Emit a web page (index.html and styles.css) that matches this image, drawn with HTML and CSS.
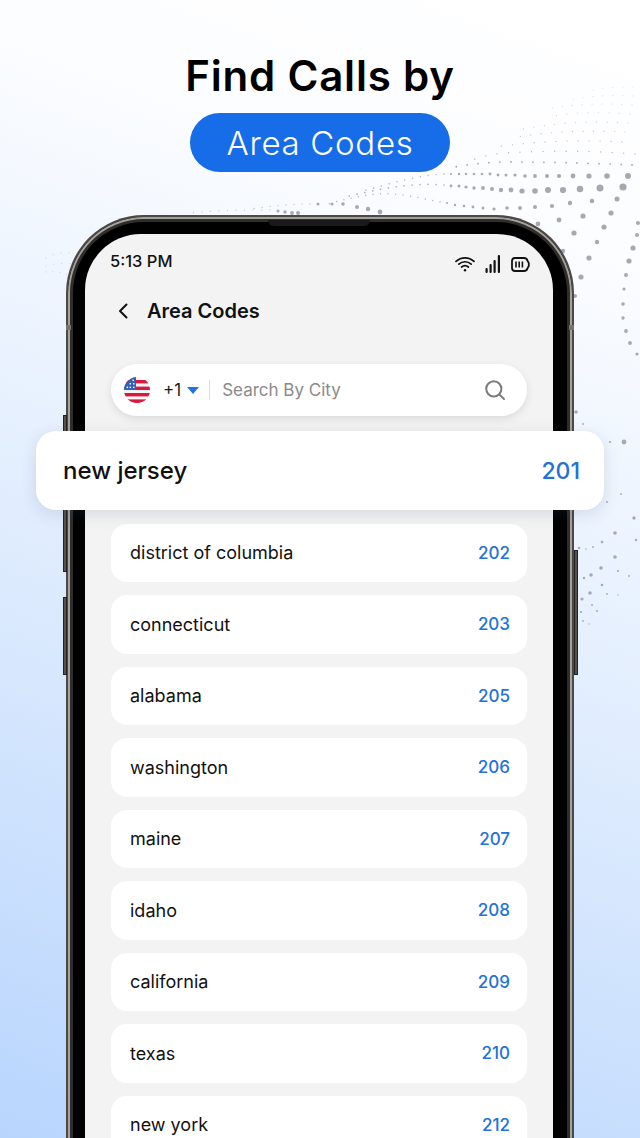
FILE: index.html
```html
<!DOCTYPE html>
<html lang="en">
  <head>
    <meta charset="UTF-8" />
    <meta name="viewport" content="width=device-width, initial-scale=1.0" />
    <title>Find Calls by Area Codes</title>
    <link rel="stylesheet" href="styles.css">
  </head>
  <body>
    <!-- Dotted wave behind the phone -->
    <svg class="dots" width="640" height="1138" viewBox="0 0 640 1138" aria-hidden="true">
      <g fill="none" stroke="#a6aab0" stroke-linecap="round">
        <path stroke-width="0.9" stroke-dasharray="0 10" opacity="0.5" d="M633 87 C610 87 600 88 585 92" />
        <path stroke-width="0.9" stroke-dasharray="0 10" opacity="0.55" d="M633 96 C605 95 590 96 570 100" />
        <path stroke-width="1" stroke-dasharray="0 10" opacity="0.6" d="M632 105 C605 103 580 104 550 108" />
        <path stroke-width="1" stroke-dasharray="0 10.5" opacity="0.65" d="M630 114 C600 112 575 112 555 116" />
        <path stroke-width="1.1" stroke-dasharray="0 10.5" opacity="0.7" d="M628 123 C595 121 560 122 523 129" />
        <path stroke-width="1.2" stroke-dasharray="0 10.5" opacity="0.75" d="M625 132 C590 130 550 131 510 138" />
        <path stroke-width="1.3" stroke-dasharray="0 11" opacity="0.8" d="M622 142 C590 140 545 140 495 147" />
        <path stroke-width="1.4" stroke-dasharray="0 11.5" opacity="0.85" d="M635 154 C600 151 550 150 505 153 C490 154 480 157 470 161" />
        <path stroke-width="1.8" stroke-dasharray="0 11" d="M632 165 C590 163 540 162 510 162 C490 162 470 164 455 167" />
        <path stroke-width="1.6" stroke-dasharray="0 8" opacity="0.85" d="M444 174 C420 175 395 182 360 192" />
        <path stroke-width="1.7" stroke-dasharray="0 8" opacity="0.9" d="M444 185 C420 183 395 185 345 197" />
        <path stroke-width="1.4" stroke-dasharray="0 7.5" opacity="0.9" d="M440 202 C420 198 395 192 377 194 C360 196 345 199 328 204" />
        <path stroke-width="1.3" stroke-dasharray="0 8" opacity="0.8" d="M310 204 C290 204 270 206 250 209" />
        <path stroke-width="1.2" stroke-dasharray="0 8.5" opacity="0.75" d="M270 210 C245 209 215 211 188 213" />
        <path stroke-width="1" stroke-dasharray="0 8" opacity="0.6" d="M46 258 C56 252 66 252 78 254" />
        <path stroke-width="1" stroke-dasharray="0 8" opacity="0.6" d="M46 266 C56 263 64 263 74 264" />
        <path stroke-width="1" stroke-dasharray="0 7" opacity="0.6" d="M46 272 C54 271 62 272 70 276" />
      </g>
      <g fill="#a6aab0">
        <circle cx="628" cy="176" r="3" /><circle cx="607" cy="176" r="2.8" /><circle cx="589" cy="176" r="2.6" />
        <circle cx="573" cy="176" r="2.4" /><circle cx="559" cy="176" r="2.1" /><circle cx="547" cy="176" r="2" />
        <circle cx="535" cy="176" r="1.9" /><circle cx="525" cy="176" r="1.8" /><circle cx="515" cy="175" r="1.6" />
        <circle cx="506" cy="175" r="1.5" /><circle cx="498" cy="175" r="1.4" /><circle cx="490" cy="174" r="1.4" />
        <circle cx="482" cy="174" r="1.3" /><circle cx="474" cy="174" r="1.3" /><circle cx="466" cy="174" r="1.2" />
        <circle cx="459" cy="174" r="1.2" /><circle cx="451" cy="174" r="1.1" />

        <circle cx="623" cy="187" r="3.6" /><circle cx="600" cy="188" r="3.5" /><circle cx="580" cy="189" r="3.3" />
        <circle cx="563" cy="190" r="3.1" /><circle cx="548" cy="190" r="3" /><circle cx="535" cy="191" r="2.8" />
        <circle cx="522" cy="191" r="2.6" /><circle cx="511" cy="190" r="2.4" /><circle cx="501" cy="190" r="2.2" />
        <circle cx="492" cy="189" r="2" /><circle cx="483" cy="188" r="1.9" /><circle cx="474" cy="188" r="1.7" />
        <circle cx="466" cy="187" r="1.6" /><circle cx="459" cy="186" r="1.5" /><circle cx="451" cy="186" r="1.4" />

        <circle cx="617" cy="199" r="2.5" /><circle cx="592" cy="201" r="2.3" /><circle cx="570" cy="203" r="2.2" />
        <circle cx="552" cy="206" r="2.1" /><circle cx="535" cy="207" r="2" /><circle cx="520" cy="208" r="1.9" />
        <circle cx="507" cy="208" r="1.8" /><circle cx="494" cy="209" r="1.6" /><circle cx="483" cy="208" r="1.5" />
        <circle cx="473" cy="207" r="1.4" /><circle cx="464" cy="206" r="1.3" /><circle cx="455" cy="205" r="1.2" />
        <circle cx="447" cy="203" r="1.1" />

        <circle cx="380" cy="212" r="2.4" /><circle cx="368" cy="209" r="2.2" /><circle cx="357" cy="207" r="2" />
        <circle cx="343" cy="204" r="1.8" /><circle cx="332" cy="204" r="1.6" /><circle cx="318" cy="204" r="1.5" />
        <circle cx="298" cy="213" r="2" /><circle cx="292" cy="213" r="1.9" /><circle cx="285" cy="212" r="1.7" />
        <circle cx="278" cy="211" r="1.5" />

        <circle cx="611" cy="213" r="2.6" /><circle cx="604" cy="227" r="2.6" /><circle cx="597" cy="242" r="2.2" />
        <circle cx="589" cy="258" r="2.6" /><circle cx="581" cy="277" r="2.6" /><circle cx="575" cy="296" r="2" />
        <circle cx="583" cy="216" r="2.6" /><circle cx="574" cy="233" r="2.6" /><circle cx="563" cy="251" r="2.2" />
        <circle cx="559" cy="220" r="2.4" /><circle cx="538" cy="224" r="2.4" />
        <circle cx="638" cy="223" r="2" /><circle cx="637" cy="235" r="2" /><circle cx="633" cy="248" r="2.6" />
        <circle cx="629" cy="261" r="2.6" /><circle cx="626" cy="275" r="2" /><circle cx="624" cy="289" r="1.6" />
        <circle cx="623" cy="304" r="1.8" /><circle cx="623" cy="318" r="1.7" /><circle cx="626" cy="331" r="1.9" />
        <circle cx="630" cy="343" r="1.9" /><circle cx="637" cy="354" r="1.6" />

        <circle cx="576" cy="412" r="1.8" /><circle cx="583" cy="424" r="0.9" />
        <circle cx="624" cy="442" r="2.4" /><circle cx="610" cy="442" r="1.1" /><circle cx="621" cy="494" r="0.9" />
        <circle cx="607" cy="502" r="1" /><circle cx="634" cy="518" r="1.7" /><circle cx="615" cy="533" r="1.8" />
        <circle cx="636" cy="540" r="1.2" /><circle cx="602" cy="542" r="1.3" /><circle cx="593" cy="547" r="0.9" />
        <circle cx="579" cy="548" r="1.2" /><circle cx="586" cy="549" r="0.8" /><circle cx="615" cy="557" r="1.8" />
        <circle cx="601" cy="568" r="1.8" /><circle cx="618" cy="571" r="1.1" /><circle cx="629" cy="576" r="0.9" />
        <circle cx="591" cy="575" r="1.8" /><circle cx="584" cy="578" r="1.2" /><circle cx="602" cy="585" r="1.3" />
        <circle cx="590" cy="593" r="1.8" /><circle cx="607" cy="594" r="0.9" /><circle cx="618" cy="595" r="0.7" />
        <circle cx="582" cy="599" r="1.6" /><circle cx="592" cy="605" r="1" /><circle cx="597" cy="611" r="1" />
        <circle cx="581" cy="612" r="1.1" /><circle cx="583" cy="621" r="0.9" /><circle cx="589" cy="624" r="0.7" />
      </g>
    </svg>

    <header class="hero">
      <h1 class="hero-title">Find Calls by</h1>
      <div class="hero-pill">Area Codes</div>
    </header>

    <div class="phone">
      <span class="side-btn side-btn-top"></span>
      <span class="side-btn side-btn-low"></span>
      <span class="side-btn side-btn-right"></span>
      <span class="speaker"></span>
      <span class="band band-left"></span>
      <span class="band band-right"></span>

      <div class="screen">
        <div class="status-bar">
          <span class="clock">5:13 PM</span>
          <div class="status-icons">
            <svg width="20" height="16" viewBox="0 0 20 16" fill="none" stroke="#111" stroke-width="1.7" stroke-linecap="round">
              <path d="M1 5.4 C6 0.6 14 0.6 19 5.4" />
              <path d="M3.8 8.2 C7.4 4.9 12.6 4.9 16.2 8.2" />
              <path d="M6.6 11 C8.6 9.3 11.4 9.3 13.4 11" />
              <circle cx="10" cy="14.2" r="1.2" fill="#111" stroke="none" />
            </svg>
            <svg width="16" height="18" viewBox="0 0 16 18" fill="#111">
              <rect x="0.5" y="13" width="2.2" height="5" rx="1" />
              <rect x="4.5" y="9" width="2.2" height="9" rx="1" />
              <rect x="8.5" y="5" width="2.2" height="13" rx="1" />
              <rect x="12.8" y="0" width="2.2" height="18" rx="1" />
            </svg>
            <svg width="19" height="15" viewBox="0 0 19 15" fill="none" stroke="#111">
              <path stroke-width="1.8" d="M4 1 H13 C15 1 16.2 2 16.6 4 L17.8 6 V9 L16.6 11 C16.2 13 15 14 13 14 H4 C2 14 1 13 1 11 V4 C1 2 2 1 4 1 Z" />
              <path stroke-width="1.6" d="M5 4.5 V10.5 M8.2 4.5 V10.5 M11.4 4.5 V10.5" />
            </svg>
          </div>
        </div>

        <div class="app-bar">
          <svg width="12" height="18" viewBox="0 0 12 18" fill="none" stroke="#111" stroke-width="2" stroke-linecap="round" stroke-linejoin="round">
            <path d="M9.5 2.5 L3 9 L9.5 15.5" />
          </svg>
          <span class="app-title">Area Codes</span>
        </div>

        <div class="search-bar">
          <svg class="flag" width="26" height="26" viewBox="0 0 26 26">
            <defs>
              <clipPath id="flagClip"><circle cx="13" cy="13" r="13" /></clipPath>
            </defs>
            <g clip-path="url(#flagClip)">
              <rect width="26" height="26" fill="#f4f4f4" />
              <rect y="3" width="26" height="3.4" fill="#d8183c" />
              <rect y="9.6" width="26" height="3.4" fill="#d8183c" />
              <rect y="16" width="26" height="3.4" fill="#d8183c" />
              <rect y="22.4" width="26" height="3.6" fill="#d8183c" />
              <path d="M0 13 H12 V0 H8 L0 8 Z" fill="#2f5fb8" />
              <g fill="#fff">
                <rect x="8.4" y="2.6" width="1.5" height="1.5" />
                <rect x="5.6" y="6" width="1.5" height="1.5" /><rect x="9" y="6" width="1.5" height="1.5" />
                <rect x="2.6" y="9.6" width="1.5" height="1.5" /><rect x="5.6" y="9.6" width="1.5" height="1.5" />
                <rect x="9" y="9.6" width="1.5" height="1.5" />
              </g>
            </g>
          </svg>
          <span class="dial">+1</span>
          <span class="caret"></span>
          <span class="divider"></span>
          <span class="search-text">Search By City</span>
          <svg class="search-icon" width="22" height="22" viewBox="0 0 22 22" fill="none" stroke="#7b7b7b" stroke-width="2" stroke-linecap="round">
            <circle cx="9.8" cy="9.8" r="7.6" />
            <path d="M15.6 15.6 L20 20" />
          </svg>
        </div>

        <div class="row-featured">
          <span>new jersey</span>
          <span class="row-featured-code">201</span>
        </div>

        <ul class="code-list">
          <li class="code-row"><span>district of columbia</span><span class="code">202</span></li>
          <li class="code-row"><span>connecticut</span><span class="code">203</span></li>
          <li class="code-row"><span>alabama</span><span class="code">205</span></li>
          <li class="code-row"><span>washington</span><span class="code">206</span></li>
          <li class="code-row"><span>maine</span><span class="code">207</span></li>
          <li class="code-row"><span>idaho</span><span class="code">208</span></li>
          <li class="code-row"><span>california</span><span class="code">209</span></li>
          <li class="code-row"><span>texas</span><span class="code">210</span></li>
          <li class="code-row"><span>new york</span><span class="code">212</span></li>
        </ul>
      </div>
    </div>
  </body>
</html>
```

FILE: styles.css
```css
* {
  box-sizing: border-box;
}

html,
body {
  margin: 0;
  height: 1138px;
  overflow: hidden;
}

body {
  position: relative;
  width: 640px;
  font-family: Inter, "Noto Sans", sans-serif;
  color: #111;
  background: linear-gradient(200deg, #ffffff 0%, #fcfdff 18%, #e4effe 50%, #b8d5fd 100%);
}

/* Background dots */
.dots {
  position: absolute;
  top: 0;
  left: 0;
}

/* Headline */
.hero {
  position: relative;
  display: flex;
  flex-direction: column;
  align-items: center;
  padding-top: 51px;
}

.hero-title {
  margin: 0;
  font-size: 42px;
  line-height: 50px;
  font-weight: 600;
  letter-spacing: 0.8px;
  color: #000;
}

.hero-pill {
  display: flex;
  align-items: center;
  justify-content: center;
  width: 260px;
  height: 59px;
  margin-top: 12px;
  border-radius: 30px;
  background-color: #176de8;
  color: #fff;
  font-size: 33px;
  font-weight: 300;
  letter-spacing: 0.7px;
}

/* Phone body */
.phone {
  position: relative;
  width: 508px;
  height: 960px;
  margin: 43px 0 0 66px;
  padding: 17px 19px 0 17px;
  border: 2px solid #4b4845;
  border-bottom: none;
  border-radius: 78px 78px 0 0;
  background-color: #000;
  box-shadow: inset 0 0 0 2px #a5a19b, inset 0 0 0 5px #302e2c;
}

.side-btn {
  position: absolute;
  width: 4px;
  background-color: #55524f;
  border: 1px solid #222;
}

.side-btn-top {
  left: -5px;
  top: 198px;
  height: 157px;
}

.side-btn-low {
  left: -5px;
  top: 380px;
  height: 78px;
}

.side-btn-right {
  right: -6px;
  top: 333px;
  height: 125px;
}

.speaker {
  position: absolute;
  top: 3px;
  left: 200px;
  width: 102px;
  height: 6px;
  border-radius: 0 0 6px 6px;
  background-color: #1a1a1a;
}

.band {
  position: absolute;
  top: 108px;
  width: 5px;
  height: 5px;
  background-color: #77736f;
}

.band-left {
  left: -2px;
}

.band-right {
  right: -2px;
}

.screen {
  position: relative;
  height: 960px;
  padding: 0 26px;
  border-radius: 56px 56px 0 0;
  background-color: #f3f3f3;
}

/* Status bar */
.status-bar {
  display: flex;
  align-items: center;
  justify-content: space-between;
  height: 54px;
  margin: 0 -3px 0 -1px;
}

.clock {
  font-size: 16.5px;
  font-weight: 500;
  color: #111;
}

.status-icons {
  display: flex;
  align-items: center;
  gap: 10px;
  margin-top: 6px;
}

/* Title row */
.app-bar {
  display: flex;
  align-items: center;
  gap: 18px;
  height: 46px;
  margin-left: 6px;
}

.app-title {
  font-size: 20px;
  font-weight: 600;
  color: #111;
}

/* Search */
.search-bar {
  display: flex;
  align-items: center;
  height: 52px;
  margin-top: 30px;
  padding: 0 21px 0 13px;
  border-radius: 26px;
  background-color: #fff;
  box-shadow: 0 3px 8px rgba(0, 0, 0, 0.1);
}

.dial {
  margin-left: 13px;
  font-size: 17px;
  color: #222;
}

.caret {
  width: 0;
  height: 0;
  margin-left: 6px;
  border-left: 6px solid transparent;
  border-right: 6px solid transparent;
  border-top: 7px solid #1f74e6;
}

.divider {
  width: 1px;
  height: 20px;
  margin-left: 10px;
  background-color: #dcdcdc;
}

.search-text {
  flex: 1;
  margin-left: 12px;
  font-size: 17px;
  color: #8a8a8a;
}

/* Highlighted row sticks out past the phone */
.row-featured {
  position: relative;
  display: flex;
  align-items: center;
  justify-content: space-between;
  height: 79px;
  margin: 15px -77px 0 -75px;
  padding: 0 24px 0 27px;
  border-radius: 20px;
  background-color: #fff;
  box-shadow: 0 4px 16px rgba(60, 80, 120, 0.16);
  font-size: 24px;
  font-weight: 500;
  color: #111;
}

.row-featured-code {
  font-size: 23px;
  color: #2272d8;
}

/* List */
.code-list {
  display: flex;
  flex-direction: column;
  gap: 13px;
  margin: 13.5px 0 0;
  padding: 0;
  list-style: none;
}

.code-row {
  display: flex;
  align-items: center;
  justify-content: space-between;
  height: 58.5px;
  padding: 0 17px 0 19px;
  border-radius: 16px;
  background-color: #fff;
  font-size: 18px;
  color: #111;
}

.code {
  font-size: 17px;
  font-weight: 500;
  color: #2272d8;
}
```
